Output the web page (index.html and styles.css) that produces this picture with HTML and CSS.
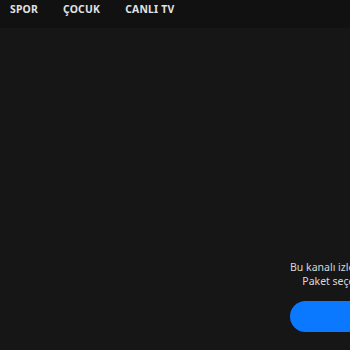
FILE: index.html
```
<!DOCTYPE html>
<html>
	<head>
		<title>Canlı TV</title>
		<meta charset="utf-8" />
		<link rel="stylesheet" href="styles.css">
	</head>
<body>
	<div id="topbar">
		<a class="navlink">SPOR</a>
		<a class="navlink">ÇOCUK</a>
		<a class="navlink">CANLI TV</a>
	</div>
	<div id="player">
		<div class="notice">
			<div class="msg">Bu kanalı izlemek için üye olmalısınız.</div>
			<div class="msg">Paket seçeneklerini de inceleyin.</div>
			<button class="subbutt">Abone Ol</button>
		</div>
	</div>
</body>
</html>
```
FILE: styles.css
```
body {
	margin: 0;
	width: 350px;
	height: 350px;
	overflow: hidden;
	background-color: #161616;
	font-family: "Noto Sans", "Open Sans", sans-serif;
}
div#topbar {
	display: flex;
	align-items: flex-start;
	gap: 25px;
	height: 25px;
	padding: 3px 0 0 10px;
	background-color: #111111;
}
.navlink {
	color: #e2e2e2;
	font-size: 10.4px;
	line-height: 12px;
	font-weight: bold;
	letter-spacing: 0.2px;
}
div#player {
	padding: 232px 0 0 290px;
}
.notice {
	display: flex;
	flex-direction: column;
	align-items: center;
	width: max-content;
}
.msg {
	color: #d8d8d8;
	font-size: 10.5px;
	line-height: 14px;
}
button.subbutt {
	align-self: stretch;
	margin-top: 13px;
	height: 31px;
	border: none;
	border-radius: 16px;
	background-color: #0a78ff;
	color: white;
	font-size: 13px;
	font-weight: bold;
}
```
